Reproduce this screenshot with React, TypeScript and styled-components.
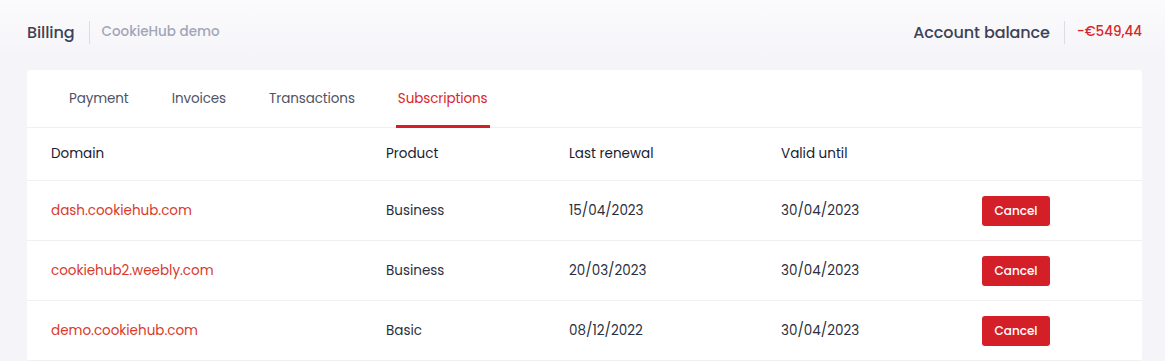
import React from "react";
import styled, { createGlobalStyle } from "styled-components";

const Global = createGlobalStyle`
  html, body { margin: 0; padding: 0; }
  body {
    background: linear-gradient(180deg, #fbfbfd 0%, #f5f5f9 60px, #f5f5f9 100%);
    font-family: "Poppins", "Inter", "Noto Sans", sans-serif;
    min-height: 361px;
  }
`;

const Page = styled.div`
  padding: 0 23px 0 27px;
`;

const Header = styled.header`
  height: 70px;
  display: flex;
  align-items: center;
  justify-content: space-between;
  padding-bottom: 6px;
  box-sizing: border-box;
`;

const Group = styled.div`
  display: flex;
  align-items: center;
`;

const Title = styled.div`
  font-size: 16px;
  font-weight: 500;
  color: #3f4254;
  letter-spacing: -0.1px;
`;

const Divider = styled.span`
  width: 1px;
  height: 23px;
  background: #dcdde4;
  margin: 0 12px 0 14px;
`;

const Sub = styled.div<{ $red?: boolean }>`
  font-size: 13.5px;
  font-weight: 500;
  color: ${(p) => (p.$red ? "#d9262c" : "#a1a5b7")};
`;

const Card = styled.section`
  background: #fff;
  border-radius: 4px;
  overflow: hidden;
`;

const Tabs = styled.nav`
  height: 58px;
  display: flex;
  align-items: stretch;
  gap: 39px;
  padding-left: 40px;
  border-bottom: 1px solid #eff0f3;
  box-sizing: border-box;
`;

const Tab = styled.div<{ $active?: boolean }>`
  display: flex;
  align-items: center;
  padding: 3px 2px 0;
  font-size: 13.5px;
  letter-spacing: -0.1px;
  color: ${(p) => (p.$active ? "#d9262c" : "#4f5366")};
  border-bottom: 3px solid ${(p) => (p.$active ? "#d41f28" : "transparent")};
  margin-bottom: -1px;
`;

const Row = styled.div<{ $head?: boolean }>`
  display: grid;
  grid-template-columns: 335px 183px 212px 201px 1fr;
  align-items: center;
  height: ${(p) => (p.$head ? "53px" : "60px")};
  padding-left: 24px;
  border-bottom: 1px solid #eff0f3;
  box-sizing: border-box;
  font-size: 13.5px;
  color: ${(p) => (p.$head ? "#181c32" : "#2b2f3e")};
`;

const Domain = styled.div`
  color: #d83a2c;
`;

const Cell = styled.div``;

const CancelButton = styled.button`
  width: 68px;
  height: 30px;
  border: none;
  border-radius: 3px;
  background: #d41f28;
  color: #fff;
  font-family: inherit;
  font-size: 12px;
  font-weight: 500;
  padding: 0;
  cursor: pointer;
`;

const rows = [
  { domain: "dash.cookiehub.com", product: "Business", last: "15/04/2023", valid: "30/04/2023" },
  { domain: "cookiehub2.weebly.com", product: "Business", last: "20/03/2023", valid: "30/04/2023" },
  { domain: "demo.cookiehub.com", product: "Basic", last: "08/12/2022", valid: "30/04/2023" },
];

export default function App() {
  return (
    <>
      <Global />
      <Page>
        <Header>
          <Group>
            <Title>Billing</Title>
            <Divider />
            <Sub>CookieHub demo</Sub>
          </Group>
          <Group>
            <Title>Account balance</Title>
            <Divider />
            <Sub $red>-€549,44</Sub>
          </Group>
        </Header>
        <Card>
          <Tabs>
            <Tab>Payment</Tab>
            <Tab>Invoices</Tab>
            <Tab>Transactions</Tab>
            <Tab $active>Subscriptions</Tab>
          </Tabs>
          <Row $head>
            <Cell>Domain</Cell>
            <Cell>Product</Cell>
            <Cell>Last renewal</Cell>
            <Cell>Valid until</Cell>
            <Cell />
          </Row>
          {rows.map((r) => (
            <Row key={r.domain}>
              <Domain>{r.domain}</Domain>
              <Cell>{r.product}</Cell>
              <Cell>{r.last}</Cell>
              <Cell>{r.valid}</Cell>
              <Cell>
                <CancelButton>Cancel</CancelButton>
              </Cell>
            </Row>
          ))}
        </Card>
      </Page>
    </>
  );
}
